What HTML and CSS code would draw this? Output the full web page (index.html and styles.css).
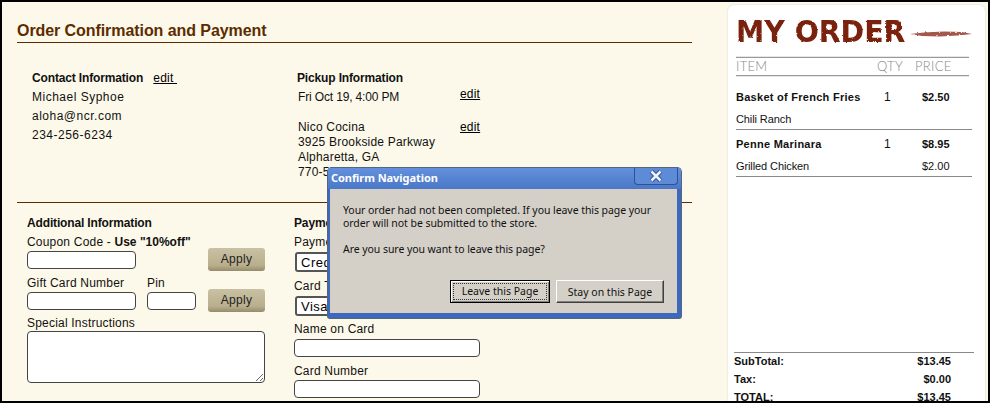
FILE: index.html
```html
<!DOCTYPE html>
<html lang="en">
<head>
    <meta charset="UTF-8">
    <title>Order Confirmation and Payment</title>
    <link rel="stylesheet" href="styles.css">
</head>
<body>
    <div class="frame">
        <main class="checkout">
            <h1 class="page-title">Order Confirmation and Payment</h1>

            <!-- Contact and pickup -->
            <section class="summary">
                <div class="contact">
                    <h3 class="info-title">Contact Information <a href="#" class="edit-link contact-edit">edit&nbsp;</a></h3>
                    <p>Michael Syphoe</p>
                    <p>aloha@ncr.com</p>
                    <p>234-256-6234</p>
                </div>
                <div class="pickup">
                    <h3 class="info-title">Pickup Information</h3>
                    <div class="pickup-row pickup-time">
                        <p class="pickup-text">Fri Oct 19, 4:00 PM</p>
                        <a href="#" class="edit-link">edit</a>
                    </div>
                    <div class="pickup-row pickup-store">
                        <p class="pickup-text">Nico Cocina<br>3925 Brookside Parkway<br>Alpharetta, GA<br>770-555-0142</p>
                        <a href="#" class="edit-link">edit</a>
                    </div>
                </div>
            </section>

            <!-- Additional info and payment -->
            <section class="forms">
                <form class="additional">
                    <h3 class="info-title">Additional Information</h3>
                    <div class="field-row">
                        <div class="field">
                            <label>Coupon Code - <b>Use "10%off"</b></label>
                            <input type="text" class="text-input wide">
                        </div>
                        <button type="button" class="apply-button">Apply</button>
                    </div>
                    <div class="field-row gift-row">
                        <div class="field">
                            <label>Gift Card Number</label>
                            <input type="text" class="text-input wide">
                        </div>
                        <div class="field">
                            <label>Pin</label>
                            <input type="text" class="text-input pin">
                        </div>
                        <button type="button" class="apply-button">Apply</button>
                    </div>
                    <label class="notes-label">Special Instructions</label>
                    <textarea class="notes"></textarea>
                </form>
                <form class="payment">
                    <h3 class="info-title">Payment Information</h3>
                    <label>Payment Type</label>
                    <select class="select-input"><option>Credit Card</option></select>
                    <label class="card-type">Card Type</label>
                    <select class="select-input"><option>Visa</option></select>
                    <label class="card-name">Name on Card</label>
                    <input type="text" class="text-input long">
                    <label class="card-number">Card Number</label>
                    <input type="text" class="text-input long">
                </form>
            </section>
        </main>

        <!-- Order sidebar -->
        <aside class="order">
            <div class="order-logo">
                <span class="logo-text">MY ORDER</span>
                <svg class="logo-stroke" width="62" height="10" viewBox="0 0 62 10">
                    <path d="M0 5 L14 3.5 L34 2.5 L52 3 L62 5 L48 6.5 L30 7.5 L12 7 Z" fill="#a4594c" filter="url(#rough)"/>
                </svg>
            </div>
            <div class="order-head">
                <span class="head-item">ITEM</span>
                <span class="head-qty">QTY</span>
                <span>PRICE</span>
            </div>
            <div class="order-row first-row">
                <b class="col-item">Basket of French Fries</b>
                <span class="col-qty">1</span>
                <b class="col-price">$2.50</b>
                <span class="col-item">Chili Ranch</span>
            </div>
            <div class="order-row">
                <b class="col-item">Penne Marinara</b>
                <span class="col-qty">1</span>
                <b class="col-price">$8.95</b>
                <span class="col-item">Grilled Chicken</span>
                <span class="col-qty"></span>
                <span class="col-price">$2.00</span>
            </div>
            <div class="totals">
                <div class="total-line"><span>SubTotal:</span><span>$13.45</span></div>
                <div class="total-line"><span>Tax:</span><span>$0.00</span></div>
                <div class="total-line"><span>TOTAL:</span><span>$13.45</span></div>
            </div>
        </aside>

        <!-- Confirm dialog -->
        <div class="dialog">
            <div class="dialog-title">
                <span>Confirm Navigation</span>
                <div class="dialog-close">
                    <svg width="14" height="12" viewBox="0 0 14 12">
                        <path d="M2.5 1.5 L11.5 10.5 M11.5 1.5 L2.5 10.5" stroke="#2f4f96" stroke-width="4.5"/>
                        <path d="M2.5 1.5 L11.5 10.5 M11.5 1.5 L2.5 10.5" stroke="#eef2fb" stroke-width="2.5"/>
                    </svg>
                </div>
            </div>
            <div class="dialog-body">
                <p>Your order had not been completed. If you leave this page your<br>order will not be submitted to the store.</p>
                <p class="dialog-question">Are you sure you want to leave this page?</p>
                <div class="dialog-buttons">
                    <button type="button" class="dialog-button default-button"><span>Leave this Page</span></button>
                    <button type="button" class="dialog-button stay-button">Stay on this Page</button>
                </div>
            </div>
        </div>
    </div>

    <svg width="0" height="0" class="svg-defs">
        <filter id="rough">
            <feTurbulence type="fractalNoise" baseFrequency="0.35" numOctaves="2" seed="4"/>
            <feDisplacementMap in="SourceGraphic" scale="2.5"/>
        </filter>
    </svg>
</body>
</html>
```

FILE: styles.css
```css
/* General Styles */
body {
    margin: 0;
    font-family: "Liberation Sans", Arial, sans-serif;
    font-size: 12px;
    letter-spacing: 0.5px;
    color: #111;
}

p, h1, h3 {
    margin: 0;
}

.frame {
    position: relative;
    display: flex;
    align-items: flex-start;
    box-sizing: border-box;
    width: 990px;
    height: 403px;
    overflow: hidden;
    border: 2px solid #000;
    background: #fdf9ea;
}

.svg-defs {
    position: absolute;
}

/* Left column */
.checkout {
    width: 726px;
    flex-shrink: 0;
}

.page-title {
    width: 675px;
    margin: 18px 0 0 15px;
    font-size: 16px;
    line-height: 22px;
    letter-spacing: -0.07px;
    color: #5c2c00;
    border-bottom: 1px solid #5c2c00;
}

.summary {
    display: flex;
    width: 675px;
    height: 133px;
    margin: 26px 0 0 15px;
    border-bottom: 1px solid #5c2c00;
}

.contact {
    width: 265px;
    padding-left: 15px;
    line-height: 19px;
}

.info-title {
    font-size: 12px;
    line-height: 19px;
    letter-spacing: -0.15px;
}

.edit-link {
    color: #000;
    font-weight: normal;
    letter-spacing: 0.2px;
}

.contact-edit {
    margin-left: 7px;
}

.pickup {
    flex: 1;
    letter-spacing: 0.2px;
}

.pickup-row {
    display: flex;
    align-items: flex-start;
}

.pickup-time .edit-link {
    line-height: 13px;
}

.pickup-time .pickup-text {
    padding-top: 2px;
    letter-spacing: -0.15px;
}

.pickup-store {
    margin-top: 15px;
}

.pickup-text {
    box-sizing: border-box;
    width: 163px;
    padding-left: 1px;
    line-height: 15px;
}

.pickup-store .edit-link {
    line-height: 15px;
}

/* Forms */
.forms {
    display: flex;
    margin: 11px 0 0 25px;
    letter-spacing: 0.2px;
}

.forms label {
    display: block;
    line-height: 18px;
    white-space: nowrap;
}

.forms label b {
    letter-spacing: 0;
}

.additional {
    width: 267px;
}

.field-row {
    display: flex;
    align-items: flex-end;
    gap: 11px;
    width: 238px;
}

.gift-row {
    margin-top: 5px;
}

.text-input {
    display: block;
    box-sizing: border-box;
    height: 18px;
    padding: 0 3px;
    background: #fff;
    border: 1px solid #444;
    border-radius: 4px;
}

.wide {
    width: 109px;
}

.pin {
    width: 49px;
}

.long {
    width: 186px;
}

.field {
    min-width: 0;
}

.apply-button {
    flex-shrink: 0;
    width: 57px;
    height: 23px;
    margin: 0 0 -2px auto;
    padding: 0 0 2px;
    font-family: inherit;
    font-size: 12px;
    letter-spacing: 0.3px;
    color: #222;
    background: linear-gradient(#c9c1a4, #b9af8d 75%, #958c6c);
    border: none;
    border-radius: 3px;
}

.forms .notes-label {
    margin-top: 5px;
    line-height: 16px;
}

.notes {
    display: block;
    box-sizing: border-box;
    width: 238px;
    height: 52px;
    margin: 0;
    background: #fff;
    border: 1px solid #444;
    border-radius: 4px;
}

.select-input {
    display: block;
    box-sizing: border-box;
    width: 186px;
    height: 20px;
    margin: 1px 0 0 1px;
    padding: 0;
    font-family: inherit;
    font-size: 13px;
    letter-spacing: 0.5px;
    background: #fff;
    border: 2px solid #555;
    border-radius: 3px;
}

.forms .card-type,
.forms .card-name,
.forms .card-number {
    margin-top: 5px;
}

.forms .card-name {
    margin-top: 4px;
    margin-bottom: 1px;
}

/* Order sidebar */
.order {
    display: flex;
    flex-direction: column;
    flex-shrink: 0;
    box-sizing: border-box;
    width: 257px;
    height: 412px;
    margin-top: 3px;
    padding: 0 0 11px 8px;
    background: #fff;
    border-radius: 6px;
    box-shadow: 0 0 2px #ccc;
}

.order-logo {
    display: flex;
    align-items: center;
    height: 52px;
    gap: 4px;
}

.logo-text {
    flex-shrink: 0;
    width: 170px;
    font-family: "DejaVu Sans", sans-serif;
    font-size: 31px;
    font-weight: bold;
    line-height: 44px;
    letter-spacing: 0;
    color: #7a2210;
    white-space: nowrap;
    transform: scaleX(0.915);
    transform-origin: left center;
    filter: url(#rough);
}

.logo-stroke {
    margin-top: 6px;
}

.order-head {
    display: flex;
    width: 233px;
    height: 17px;
    font-family: Lato, sans-serif;
    font-size: 13px;
    font-weight: 300;
    line-height: 17px;
    letter-spacing: 0.3px;
    color: #888;
    border-top: 1px solid #999;
    border-bottom: 1px solid #999;
    box-shadow: 0 1px 0 #e6e6e6, 0 -1px 0 #e6e6e6;
}

.head-item {
    width: 141px;
}

.head-qty {
    width: 38px;
}

.order-row {
    display: grid;
    grid-template-columns: 148px 38px 1fr;
    grid-template-rows: 22px 20px;
    width: 236px;
    padding-top: 4px;
    font-size: 11px;
    line-height: 21px;
    letter-spacing: -0.1px;
    border-bottom: 1px solid #888;
}

.order-row b {
    letter-spacing: 0.27px;
}

.order-row .col-price {
    letter-spacing: 0;
}

.first-row {
    margin-top: 7px;
}

.col-qty {
    font-size: 12px;
}

.totals {
    width: 240px;
    margin: auto 0 0 -2px;
    border-top: 1px solid #888;
    font-size: 11px;
    font-weight: bold;
    letter-spacing: 0;
}

.total-line {
    display: flex;
    justify-content: space-between;
    padding-right: 23px;
    line-height: 18px;
}

.total-line:first-child {
    margin-top: -1px;
}

/* Confirm dialog */
.dialog {
    position: absolute;
    left: 326px;
    top: 166px;
    box-sizing: border-box;
    display: flex;
    flex-direction: column;
    width: 353px;
    height: 150px;
    padding: 0 4px 5px 2px;
    background: #3d69bd;
    border-radius: 4px 4px 2px 2px;
    box-shadow: 0 0 0 1px #56657f;
    font-family: "Noto Sans", sans-serif;
    font-size: 10.5px;
    letter-spacing: -0.06px;
}

.dialog-title {
    display: flex;
    justify-content: space-between;
    align-items: flex-start;
    flex-shrink: 0;
    height: 21px;
    margin: 0 -4px 0 -2px;
    padding-left: 3px;
    font-size: 11px;
    font-weight: bold;
    line-height: 19px;
    color: #fff;
    background: linear-gradient(#6290dc, #4a78c8);
}

.dialog-close {
    display: flex;
    align-items: center;
    justify-content: center;
    box-sizing: border-box;
    width: 44px;
    height: 17px;
    margin-right: 3px;
    background: #5d8bd6;
    border: 1px solid #2f5197;
    border-top: none;
    border-radius: 0 0 4px 4px;
}

.dialog-body {
    display: flex;
    flex-direction: column;
    flex: 1;
    padding: 15px 13px 10px;
    line-height: 13px;
    white-space: nowrap;
    color: #111;
    background: #d4d0c8;
}

.dialog-question {
    margin-top: 13px;
}

.dialog-buttons {
    display: flex;
    justify-content: flex-end;
    gap: 6px;
    margin-top: auto;
}

.dialog-button {
    box-sizing: border-box;
    height: 23px;
    padding: 0;
    font-family: inherit;
    font-size: 10.5px;
    color: #111;
    background: #d4d0c8;
    border: 1px solid;
    border-color: #fff #404040 #404040 #fff;
    box-shadow: inset -1px -1px 0 #808080;
}

.default-button {
    width: 100px;
    padding: 2px;
    border: 1px solid #000;
    box-shadow: inset 1px 1px 0 #fff, inset -1px -1px 0 #808080;
}

.default-button span {
    display: block;
    line-height: 15px;
    border: 1px dotted #333;
}

.stay-button {
    width: 108px;
}
```
